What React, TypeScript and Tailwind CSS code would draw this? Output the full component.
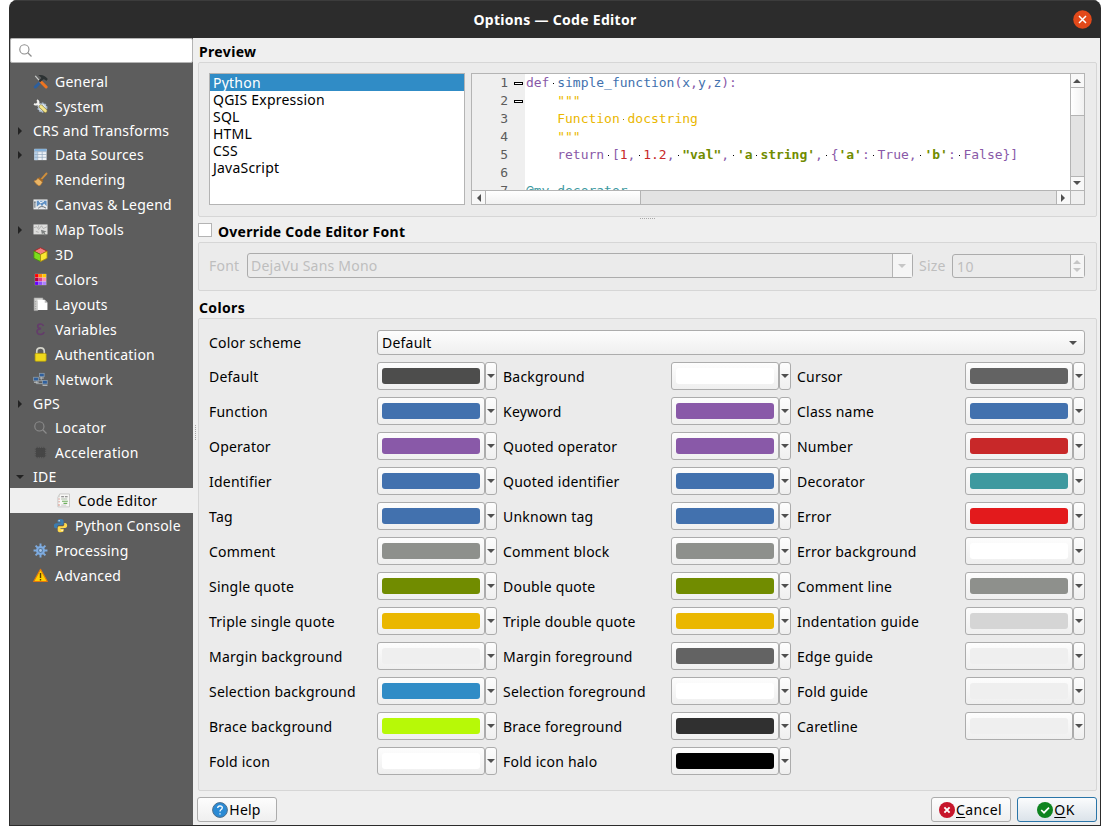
import React from "react";

type IconName =
  | "general" | "system" | "table" | "brush" | "canvas" | "map" | "cube" | "colors" | "layout"
  | "variables" | "lock" | "network" | "search" | "chip" | "editor" | "python" | "gear" | "warn";

const paletteCells = [
  "#ff0000", "#ff8a00", "#ffc800",
  "#b3003c", "#e03c8c", "#ff8cb4",
  "#6400ff", "#8c50ff", "#aa82ff",
];

function Icon({ name }: { name: IconName }) {
  const body: Record<IconName, React.ReactNode> = {
    general: (
      <>
        <path d="M2.4 14L8.5 8" stroke="#2c5f9e" strokeWidth="3" strokeLinecap="round" />
        <path d="M8 8.5L2.4 2" stroke="#c9ccca" strokeWidth="1.3" />
        <path d="M8.4 8.2L14 13.8" stroke="#ee7420" strokeWidth="3.2" strokeLinecap="round" />
        <path d="M5.5 1.4Q11 -.4 15.8 5.2L14.2 7.4Q12.4 5.2 10.8 5.8L7.6 8.8L5.8 7.2L9 4.2Q7.8 2.6 5.5 1.4Z" fill="#2c3233" />
      </>
    ),
    system: (
      <>
        <circle cx="10" cy="9.2" r="4.4" fill="#dbe4ee" stroke="#a8bace" strokeWidth="2" strokeDasharray="1.8 1" />
        <path d="M4 4L8 7.6" stroke="#eeeeec" strokeWidth="2.4" />
        <path d="M8.4 8L13.2 12.6" stroke="#8a7f45" strokeWidth="4.2" strokeLinecap="round" />
        <path d="M8.4 8L13.2 12.6" stroke="#f6e68a" strokeWidth="3" strokeLinecap="round" />
        <path d="M1.2 5Q3.4 7 5.6 5Q6.6 2.6 4.2 1.2" stroke="#f2f2f0" strokeWidth="2" fill="none" />
      </>
    ),
    table: (
      <>
        <rect x="1.5" y="2" width="13" height="12" fill="#eef2f6" />
        <rect x="1.5" y="2" width="13" height="2.6" fill="#86b3dc" />
        <rect x="1.5" y="5.4" width="3" height="8.6" fill="#b5d0ea" />
        <path d="M1.5 5H14.5M1.5 8H14.5M1.5 11H14.5M5 5V14M9.8 5V14" stroke="#8fa5ba" strokeWidth=".7" />
      </>
    ),
    brush: (
      <>
        <path d="M14.4 1.6L9.5 7" stroke="#cf8f3c" strokeWidth="2" strokeLinecap="round" />
        <path d="M6.6 5.2L11 9.2L9.8 10.6L5.4 6.8Z" fill="#a8681f" />
        <path d="M5.2 6.6L10 10.8Q8.6 14.2 6.4 14.8Q3 13 1 9.6Q3.8 9.4 5.2 6.6Z" fill="#eab566" stroke="#b9782a" strokeWidth=".6" />
      </>
    ),
    canvas: (
      <>
        <rect x=".5" y="2.6" width="15" height="10.6" fill="#e9ecee" />
        <path d="M4 4H14.5V9.8L11.8 6.8L9.6 9.8L7.6 7.4L4 10.4Z" fill="#5f90c4" />
        <path d="M6.5 4.2L8.2 6.2L11.5 4.6" stroke="#eef2f5" strokeWidth="1.2" fill="none" />
        <path d="M2 5V11.5M1.3 5.4H2.8M5.5 12Q9 8.5 13.8 11.8" stroke="#4b5560" strokeWidth=".9" fill="none" />
      </>
    ),
    map: (
      <>
        <rect x=".5" y="2.6" width="15" height="10.6" fill="#dededd" />
        <path d="M1 6L4 5L6 8L9 4L11 7L15 5M3 10L6 11M6 3.5V6" stroke="#a4a4a4" strokeWidth=".8" fill="none" />
        <path d="M8.5 8.2L14.5 10L12.3 11L13.8 14L12.3 14.5L11 11.8L9.5 13Z" fill="#7d8080" />
      </>
    ),
    cube: (
      <>
        <path d="M8 .8L15 4.4L8 8L1 4.4Z" fill="#f28080" stroke="#b02020" strokeWidth=".9" />
        <path d="M1 4.4L8 8V15.5L1 12Z" fill="#7ddc1c" stroke="#4a8f0c" strokeWidth=".9" />
        <path d="M15 4.4L8 8V15.5L15 12Z" fill="#fbe832" stroke="#ad8d10" strokeWidth=".9" />
      </>
    ),
    colors: (
      <>
        <rect x="2" y="2" width="12.2" height="12" fill="#f0d8e0" />
        {paletteCells.map((c, i) => (
          <rect key={c} x={2.2 + (i % 3) * 4} y={2.2 + Math.floor(i / 3) * 4} width="3.7" height="3.6" fill={c} />
        ))}
      </>
    ),
    layout: (
      <>
        <path d="M1.2 1H10.5V4.5H5V14.5H1.2Z" fill="#cfcfcd" stroke="#aaa" strokeWidth=".6" />
        <path d="M4.8 3H12.5L15.4 6V13.8H4.8Z" fill="#fff" />
        <path d="M12.5 3V6H15.4Z" fill="#b8b8b8" />
        <path d="M2 5H3.4M2 7.5H3.4M2 10H3.4M2 12.5H3.4" stroke="#888" strokeWidth=".7" />
      </>
    ),
    variables: (
      <path d="M11.2 4.2Q10.6 2 8 2.1Q5 2.2 5 4.6Q5 6.9 8.6 7.1Q4.2 7.5 4.3 10.4Q4.5 13.3 8 13.3Q11 13.2 11.9 10.6" fill="none" stroke="#643c6b" strokeWidth="1.7" />
    ),
    lock: (
      <>
        <path d="M4 8V4.6Q4 .9 8 .9Q12 .9 12 4.6V8" stroke="#d4d4ca" strokeWidth="1.8" fill="none" />
        <rect x="2.2" y="6.8" width="11.8" height="8.4" rx="1" fill="#efd91c" stroke="#b59d08" strokeWidth=".8" />
      </>
    ),
    network: (
      <>
        <path d="M3.5 9V12.4H12M8.8 5V9.5M4 9.4H13V12" stroke="#9fa6ab" strokeWidth="1" fill="none" />
        <rect x="6.9" y="1.4" width="5" height="3.6" fill="#2f5f9c" stroke="#8fa0b0" strokeWidth=".8" />
        <rect x=".7" y="5.6" width="5" height="3.8" fill="#2f5f9c" stroke="#8fa0b0" strokeWidth=".8" />
        <rect x="10.2" y="9" width="5" height="3.8" fill="#2f5f9c" stroke="#8fa0b0" strokeWidth=".8" />
        <path d="M7 6.4H11.5M10.2 14.2H15.4M1 10.9H6" stroke="#c9cdd0" strokeWidth="1" />
      </>
    ),
    search: (
      <>
        <circle cx="6.8" cy="6.8" r="4.9" stroke="#8c8c8c" strokeWidth="1.2" fill="none" />
        <path d="M10.4 10.4L14.4 14.4" stroke="#8c8c8c" strokeWidth="1.4" />
      </>
    ),
    chip: (
      <>
        <rect x="3.2" y="3.2" width="9.6" height="9.6" fill="#474747" />
        <path d="M4.5 2V14M6.8 2V14M9.2 2V14M11.5 2V14M2 4.5H14M2 6.8H14M2 9.2H14M2 11.5H14" stroke="#474747" strokeWidth=".8" />
      </>
    ),
    editor: (
      <>
        <path d="M4 1H14.4V14.8H2V4.6Z" fill="#f8f8f6" stroke="#bdbdbb" strokeWidth=".8" />
        <path d="M4 1V4.6H2Z" fill="#d0d0ce" />
        <path d="M5.5 4H8.5M9.5 4H12.4" stroke="#777" strokeWidth="1.1" />
        <path d="M5.5 6.4H12" stroke="#a7bba3" strokeWidth="1" />
        <path d="M6.4 8.8H12.6M8 11H12" stroke="#6cae5c" strokeWidth="1.2" />
        <path d="M2.6 6.4H4M2.6 9.4H4M2.2 12.8H4.2" stroke="#d8867a" strokeWidth="1" />
        <path d="M5.5 12.9H11" stroke="#bbb" strokeWidth=".8" />
      </>
    ),
    python: (
      <>
        <path d="M8 1C5 1 4.8 2.2 4.8 3.2V4.8H8.3V5.5H3.3C1.8 5.5 1 6.6 1 8.2S1.8 11 3.2 11H4.5V9.2C4.5 8 5.4 7.4 6.5 7.4H9.7C10.7 7.4 11.3 6.7 11.3 5.7V3.2C11.3 1.8 10.2 1 8 1Z" fill="#3b7cb0" />
        <path d="M8 15.2C11 15.2 11.4 14 11.4 13V11.4H8V10.7H12.8C14.3 10.7 15.1 9.6 15.1 8S14.3 5.2 12.9 5.2H12V7C12 8.2 11 8.9 10 8.9H6.7C5.7 8.9 5 9.6 5 10.6V13C5 14.4 6 15.2 8 15.2Z" fill="#ffd94b" />
        <circle cx="6.5" cy="2.9" r=".7" fill="#fff" />
        <circle cx="9.7" cy="13.2" r=".7" fill="#fff" />
      </>
    ),
    gear: (
      <>
        <path d="M8 .6V15.4M.6 8H15.4M2.8 2.8L13.2 13.2M13.2 2.8L2.8 13.2" stroke="#7eabdf" strokeWidth="2.1" />
        <circle cx="8" cy="8" r="4.8" fill="#7eabdf" />
        <circle cx="8" cy="8" r="2.6" fill="#55779c" />
        <circle cx="8" cy="8" r="1.5" fill="#a9c6e8" />
      </>
    ),
    warn: (
      <>
        <path d="M8 1.4L15.3 14.4H.7Z" fill="#ffd000" stroke="#e6780a" strokeWidth="1.2" strokeLinejoin="round" />
        <path d="M8 5.2V10.6M8 11.6V13.2" stroke="#5a3a00" strokeWidth="1.5" />
      </>
    ),
  };
  return (
    <svg viewBox="0 0 16 16" className="h-[15px] w-[15px] shrink-0">
      {body[name]}
    </svg>
  );
}

function Caret({ dir, light }: { dir: "up" | "down" | "left" | "right"; light?: boolean }) {
  const d = {
    up: "M0 6L4 2L8 6Z",
    down: "M0 2H8L4 6Z",
    left: "M6 0V8L2 4Z",
    right: "M2 0V8L6 4Z",
  }[dir];
  return (
    <svg viewBox="0 0 8 8" className="h-2 w-2 shrink-0">
      <path d={d} fill={light ? "#c6c6c6" : "#505050"} />
    </svg>
  );
}

type TreeItem = { label: string; icon?: IconName; arrow?: "right" | "down"; child?: boolean; active?: boolean };

const tree: TreeItem[] = [
  { label: "General", icon: "general" },
  { label: "System", icon: "system" },
  { label: "CRS and Transforms", arrow: "right" },
  { label: "Data Sources", icon: "table", arrow: "right" },
  { label: "Rendering", icon: "brush" },
  { label: "Canvas & Legend", icon: "canvas" },
  { label: "Map Tools", icon: "map", arrow: "right" },
  { label: "3D", icon: "cube" },
  { label: "Colors", icon: "colors" },
  { label: "Layouts", icon: "layout" },
  { label: "Variables", icon: "variables" },
  { label: "Authentication", icon: "lock" },
  { label: "Network", icon: "network" },
  { label: "GPS", arrow: "right" },
  { label: "Locator", icon: "search" },
  { label: "Acceleration", icon: "chip" },
  { label: "IDE", arrow: "down" },
  { label: "Code Editor", icon: "editor", child: true, active: true },
  { label: "Python Console", icon: "python", child: true },
  { label: "Processing", icon: "gear" },
  { label: "Advanced", icon: "warn" },
];

function Sidebar() {
  return (
    <aside className="flex w-[183px] shrink-0 flex-col bg-[#5d5d5d]">
      <div className="flex h-[25px] items-center rounded-[2px] border border-[#b4b4b4] bg-white pl-[7px]">
        <Icon name="search" />
      </div>
      <ul className="mt-1.5 flex flex-col">
        {tree.map((item) => (
          <li
            key={item.label}
            className={`flex items-center whitespace-nowrap ${item.icon ? "h-[25px]" : "h-[23px]"} ${
              item.active ? "bg-[#efefef] text-black" : "text-white"
            }`}
          >
            <span className={`flex shrink-0 pl-1.5 ${item.child ? (item.active ? "w-[46px]" : "w-[43px]") : "w-[23px]"}`}>
              {item.arrow && (
                <svg viewBox="0 0 8 8" className="h-2 w-2">
                  <path d={item.arrow === "right" ? "M2 0V8L6 4Z" : "M0 2H8L4 6Z"} fill="#222" />
                </svg>
              )}
            </span>
            {item.icon && (
              <span className="flex w-[22px] pb-px">
                <Icon name={item.icon} />
              </span>
            )}
            <span>{item.label}</span>
          </li>
        ))}
      </ul>
    </aside>
  );
}

type Tok = [string, string];
const purple = "text-[#8959a8]";
const blue = "text-[#4271ae]";
const yellow = "text-[#eab700]";
const red = "text-[#c82829]";
const olive = "font-bold text-[#718c00]";
const teal = "text-[#3e999f]";

const code: { fold?: boolean; toks: Tok[] }[] = [
  { fold: true, toks: [[purple, "def·"], [blue, "simple_function"], [purple, "("], [blue, "x"], [purple, ","], [blue, "y"], [purple, ","], [blue, "z"], [purple, "):"]] },
  { fold: true, toks: [[yellow, '    """']] },
  { toks: [[yellow, "    Function·docstring"]] },
  { toks: [[yellow, '    """']] },
  {
    toks: [
      [purple, "    return·["], [red, "1"], [purple, ",·"], [red, "1.2"], [purple, ",·"], [olive, '"val"'], [purple, ",·"],
      [olive, "'a·string'"], [purple, ",·{"], [olive, "'a'"], [purple, ":·True,·"], [olive, "'b'"], [purple, ":·False}]"],
    ],
  },
  { toks: [] },
  { toks: [[teal, "@my_decorator"]] },
];

function Token({ tok }: { tok: Tok }) {
  const parts = tok[1].split("·");
  return (
    <span className={tok[0]}>
      {parts.map((p, i) => (
        <React.Fragment key={i}>
          {i > 0 && (
            <span className="inline-flex h-px w-[1ch] justify-center align-[3px]">
              <i className={`h-px w-px ${tok[0] === yellow ? "bg-[#a08000]" : "bg-black"}`} />
            </span>
          )}
          {p}
        </React.Fragment>
      ))}
    </span>
  );
}

function CodeView() {
  return (
    <div className="flex h-[132px] w-[614px] flex-col border border-[#b4b4b4] bg-white">
      <div className="flex h-[116px]">
        <div className="h-[116px] flex-1 overflow-hidden bg-[linear-gradient(to_right,#efefef_53px,#fff_53px)] font-['DejaVu_Sans_Mono',monospace] text-[13px] leading-[18px] tracking-[-0.015px]">
          {code.map((line, i) => (
            <div key={i} className="flex h-[18px] whitespace-pre">
              <span className="w-9 text-right text-[#5c5c5c]">{i + 1}</span>
              <span className="flex w-[18px] items-center pt-px pl-1.5">
                {line.fold && <i className="h-[3px] w-[9px] border border-black bg-white" />}
              </span>
              <span>
                {line.toks.map((t, j) => (
                  <Token key={j} tok={t} />
                ))}
              </span>
            </div>
          ))}
        </div>
        <div className="flex w-[14px] flex-col border-l border-[#b4b4b4] bg-[#e3e3e3]">
          <div className="flex h-[13px] items-center justify-center bg-[#f8f8f8] pr-px"><Caret dir="up" /></div>
          <div className="h-[29px] border-y border-[#b4b4b4] bg-gradient-to-r from-white to-[#f1f1f1]" />
          <div className="flex-1" />
          <div className="flex h-[14px] items-center justify-center border-t border-[#b4b4b4] bg-[#f8f8f8] pr-px pb-px"><Caret dir="down" /></div>
        </div>
      </div>
      <div className="flex h-[14px] border-t border-[#b4b4b4] bg-[#e3e3e3]">
        <div className="flex w-[13px] items-center justify-center bg-[#f8f8f8]"><Caret dir="left" /></div>
        <div className="w-[156px] border-x border-[#b4b4b4] bg-gradient-to-b from-white to-[#f1f1f1]" />
        <div className="flex-1" />
        <div className="flex w-[14px] items-center justify-center border-l border-[#b4b4b4] bg-[#f8f8f8] pr-px"><Caret dir="right" /></div>
        <div className="w-[14px] border-l border-[#b4b4b4] bg-[#efefef]" />
      </div>
    </div>
  );
}

const box = "rounded-[3px] border border-[#acacac] bg-gradient-to-b from-[#fdfdfd] to-[#efefef]";
const group = "rounded-[2px] border border-[#d6d6d6] bg-[#ebebeb]";

const swatches: [string, string][] = [
  ["Default", "#4d4d4c"], ["Background", "#ffffff"], ["Cursor", "#636363"],
  ["Function", "#4271ae"], ["Keyword", "#8959a8"], ["Class name", "#4271ae"],
  ["Operator", "#8959a8"], ["Quoted operator", "#8959a8"], ["Number", "#c82829"],
  ["Identifier", "#4271ae"], ["Quoted identifier", "#4271ae"], ["Decorator", "#3e999f"],
  ["Tag", "#4271ae"], ["Unknown tag", "#4271ae"], ["Error", "#e31a1c"],
  ["Comment", "#8e908c"], ["Comment block", "#8e908c"], ["Error background", "#ffffff"],
  ["Single quote", "#718c00"], ["Double quote", "#718c00"], ["Comment line", "#8e908c"],
  ["Triple single quote", "#eab700"], ["Triple double quote", "#eab700"], ["Indentation guide", "#d5d5d5"],
  ["Margin background", "#efefef"], ["Margin foreground", "#636363"], ["Edge guide", "#efefef"],
  ["Selection background", "#308cc6"], ["Selection foreground", "#ffffff"], ["Fold guide", "#efefef"],
  ["Brace background", "#b7f907"], ["Brace foreground", "#303030"], ["Caretline", "#efefef"],
  ["Fold icon", "#ffffff"], ["Fold icon halo", "#000000"],
];

function ColorRow({ label, color }: { label: string; color: string }) {
  return (
    <div className="flex h-7 w-[294px] items-center">
      <span className="w-[168px] whitespace-nowrap pt-0.5">{label}</span>
      <div className={`flex h-7 w-[108px] items-center justify-center ${box}`}>
        <span className="h-4 w-[98px] rounded-[3px]" style={{ backgroundColor: color }} />
      </div>
      <div className={`flex h-7 w-3 items-center justify-center ${box}`}>
        <Caret dir="down" />
      </div>
    </div>
  );
}

function Grip({ vertical }: { vertical?: boolean }) {
  return (
    <div className={`flex gap-px ${vertical ? "flex-col" : ""}`}>
      {Array.from({ length: 8 }, (_, i) => <i key={i} className="h-px w-px bg-[#a8a8a8]" />)}
    </div>
  );
}

function Content() {
  return (
    <main className="flex min-w-0 flex-1 bg-[#efefef]">
      <div className="flex w-[5px] shrink-0 justify-center pt-[387px]">
        <Grip vertical />
      </div>
      <div className="flex min-w-0 flex-1 flex-col">
        <h2 className="flex h-6 items-end pl-px font-bold leading-5 tracking-[0.35px]">Preview</h2>
        <section className={`mr-[3px] flex h-[155px] gap-1.5 pt-2.5 pl-2.5 ${group}`}>
          <ul className="h-[132px] w-64 border border-[#b4b4b4] bg-white leading-[17px]">
            {["Python", "QGIS Expression", "SQL", "HTML", "CSS", "JavaScript"].map((l, i) => (
              <li key={l} className={`h-[17px] pl-[3px] ${i === 0 ? "bg-[#308cc6] text-white" : ""}`}>{l}</li>
            ))}
          </ul>
          <CodeView />
        </section>
        <div className="flex h-1.5 justify-center pt-px pr-1">
          <Grip />
        </div>
        <div className="flex h-[19px] gap-1.5">
          <span className="h-3.5 w-3.5 border border-[#b4b4b4] bg-white" />
          <span className="font-bold leading-[18px] tracking-[0.26px]">Override Code Editor Font</span>
        </div>
        <section className={`mr-[3px] flex h-[49px] items-start pt-2.5 pl-2.5 text-[#bebebe] ${group}`}>
          <span className="w-[38px] pt-[3px]">Font</span>
          <div className="flex h-[25px] w-[666px] items-center rounded-[3px] border border-[#acacac] pl-[3px]">
            <span className="flex-1">DejaVu Sans Mono</span>
            <span className="flex h-full w-5 items-center justify-center border-l border-[#b4b4b4] bg-[#f5f5f5] pr-0.5"><Caret dir="down" light /></span>
          </div>
          <span className="w-[39px] pt-[3px] pl-1.5">Size</span>
          <div className="mt-px flex h-6 w-[133px] items-center rounded-[3px] border border-[#acacac] pl-1">
            <span className="flex-1 pt-px tracking-[0.4px]">10</span>
            <span className="flex h-full w-[14px] flex-col items-center justify-center border-l border-[#b4b4b4] bg-[#f5f5f5] pr-px">
              <Caret dir="up" light />
              <Caret dir="down" light />
            </span>
          </div>
        </section>
        <h2 className="flex h-[27px] items-center pt-1.5 pl-px font-bold leading-5 tracking-[0.35px]">Colors</h2>
        <section className={`mr-[3px] h-[473px] pt-[11px] pl-2.5 ${group}`}>
          <div className="flex items-center">
            <span className="w-[168px]">Color scheme</span>
            <div className={`flex h-[25px] w-[708px] items-center justify-between pr-[7px] pl-1 ${box}`}>
              <span>Default</span>
              <Caret dir="down" />
            </div>
          </div>
          <div className="mt-[7px] grid w-[882px] grid-cols-3 gap-y-[7px]">
            {swatches.map(([label, color]) => <ColorRow key={label} label={label} color={color} />)}
          </div>
        </section>
        <footer className="-ml-px flex gap-1.5 pt-1.5 pr-[3px]">
          <button className={`flex h-[25px] w-20 items-center justify-center pr-px ${box}`}>
            <svg viewBox="0 0 16 16" className="h-4 w-4">
              <circle cx="8" cy="8" r="7.4" fill="#2a8ad4" stroke="#4f6f8c" />
              <path d="M5.7 6Q5.8 3.8 8 3.8Q10.3 3.9 10.3 5.8Q10.2 7 8.9 7.8Q8 8.4 8 9.6M8 11.2V12.6" stroke="#fff" strokeWidth="1.3" fill="none" />
            </svg>
            <span className="pl-px">Help</span>
          </button>
          <span className="flex-1" />
          <button className={`flex h-[25px] w-20 items-center justify-center pr-px ${box}`}>
            <svg viewBox="0 0 16 16" className="h-4 w-4">
              <circle cx="8" cy="8" r="8" fill="#c7162b" />
              <path d="M5.4 5.4L10.6 10.6M10.6 5.4L5.4 10.6" stroke="#fff" strokeWidth="1.9" />
            </svg>
            <span className="pl-px tracking-[0.4px]"><u className="underline-offset-2">C</u>ancel</span>
          </button>
          <button className="flex h-[25px] w-20 items-center justify-center rounded-[3px] border border-[#2a75a8] bg-gradient-to-b from-[#fbfcfd] to-[#dbe3ea] pr-0.5">
            <svg viewBox="0 0 16 16" className="h-4 w-4">
              <circle cx="8" cy="8" r="8" fill="#0e8420" />
              <path d="M4.2 8L7 10.7L12 5.6" stroke="#fff" strokeWidth="1.7" fill="none" />
            </svg>
            <span className="pl-px tracking-[0.4px]"><u className="underline-offset-2">O</u>K</span>
          </button>
        </footer>
      </div>
    </main>
  );
}

export default function App() {
  return (
    <div className="h-[835px] w-[1110px] overflow-hidden bg-white pl-[9px] font-['Noto_Sans',sans-serif] text-[14px] leading-5 tracking-[0.22px] text-black">
      <div className="flex h-[826px] w-[1092px] flex-col overflow-hidden rounded-t-[8px] bg-[#2c2c2c]">
        <header className="flex h-[38px] shrink-0 items-center border-t border-[#3c3c3c] pr-[9px] pl-[28px]">
          <h1 className="flex-1 text-center text-[14px] font-bold tracking-[0.3px] text-white">Options — Code Editor</h1>
          <svg viewBox="0 0 19 19" className="h-[19px] w-[19px]">
            <circle cx="9.5" cy="9.5" r="9.3" fill="#e2491a" />
            <path d="M6 6L13 13M13 6L6 13" stroke="#fff" strokeWidth="1.5" />
          </svg>
        </header>
        <div className="mx-px flex h-[787px]">
          <Sidebar />
          <Content />
        </div>
      </div>
    </div>
  );
}
